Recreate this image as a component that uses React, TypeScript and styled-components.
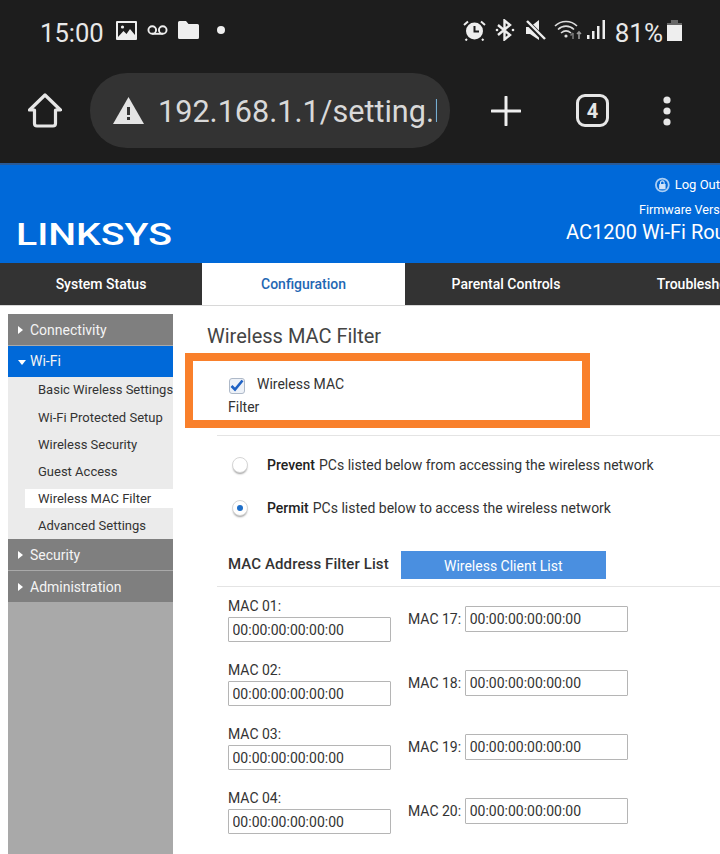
import React from "react";
import styled, { createGlobalStyle } from "styled-components";

const Global = createGlobalStyle`
  html, body { margin: 0; padding: 0; background: #fff; }
  body { font-family: Roboto, "Liberation Sans", sans-serif; }
  * { box-sizing: border-box; }
`;

const Page = styled.div`
  position: relative;
  width: 720px;
  height: 854px;
  overflow: hidden;
  display: flex;
  flex-direction: column;
`;

const Chrome = styled.header`
  height: 165px;
  flex: none;
  background: #1d1d1d;
  border-bottom: 2px solid #2a5a96;
  color: #eaeaea;
`;

const StatusBar = styled.div`
  height: 62px;
  padding: 4px 38px 0 40px;
  display: flex;
  align-items: center;
`;

const Clock = styled.span`
  font-size: 25.6px;
  line-height: 32px;
  color: #e8e8e8;
  margin-right: 12px;
`;

const StatusGroup = styled.div`
  display: flex;
  align-items: center;
  margin-bottom: 6px;
`;

const Slot = styled.span<{ $ml: number }>`
  display: flex;
  margin-left: ${(p) => p.$ml}px;
`;

const Spacer = styled.div`
  flex: 1;
`;

const Percent = styled.span`
  font-size: 26px;
  line-height: 32px;
  margin: 6px 0 0 9px;
  color: #e8e8e8;
`;

const Toolbar = styled.div`
  height: 101px;
  padding: 11px 0 15px 28px;
  display: flex;
  align-items: center;
`;

const UrlPill = styled.div`
  width: 360px;
  height: 75px;
  margin-left: 28px;
  padding: 0 13px 0 23px;
  border-radius: 37px;
  background: #333333;
  display: flex;
  align-items: center;
  flex: none;
`;

const UrlText = styled.div`
  margin: 2px 0 0 14px;
  font-size: 30.6px;
  color: #d9d9d9;
  white-space: nowrap;
  overflow: hidden;
  flex: 1;
`;

const ToolIcons = styled.div`
  margin-left: 41px;
  display: flex;
  align-items: center;
`;

const TabCount = styled.div`
  width: 33px;
  height: 33px;
  margin-left: 55px;
  border: 3px solid #e6e6e6;
  border-radius: 9px;
  display: flex;
  align-items: center;
  justify-content: center;
  font-size: 20px;
  font-weight: 700;
  color: #e6e6e6;
`;

const DotsWrap = styled.div`
  margin-left: 54px;
  display: flex;
`;

const BrandBar = styled.div`
  height: 98px;
  flex: none;
  background: #0069d9;
  color: #fff;
  position: relative;
  display: flex;
`;

const LogoWrap = styled.div`
  margin: 56px 0 0 16px;
  width: 157px;
  height: 24px;
  flex: none;
  svg {
    overflow: visible;
    display: block;
  }
`;

const Meta = styled.div`
  flex: 1;
  display: flex;
  flex-direction: column;
  overflow: hidden;
`;

const MetaLine = styled.div<{ $left: number; $size: number; $top: number }>`
  margin-left: ${(p) => p.$left}px;
  margin-top: ${(p) => p.$top}px;
  font-size: ${(p) => p.$size}px;
  line-height: ${(p) => p.$size + 4}px;
  white-space: nowrap;
  display: flex;
  align-items: center;
  gap: 5px;
`;

const Tabs = styled.nav`
  height: 43px;
  flex: none;
  display: flex;
  background: #333;
  overflow: hidden;
`;

const Tab = styled.div<{ $active?: boolean; $w: number }>`
  width: ${(p) => p.$w}px;
  flex: none;
  display: flex;
  align-items: center;
  justify-content: center;
  font-size: 14px;
  font-weight: 500;
  white-space: nowrap;
  color: ${(p) => (p.$active ? "#1f67b3" : "#fff")};
  background: ${(p) => (p.$active ? "#fff" : "#333")};
  border-bottom: 1px solid #d8d8d8;
`;

const Body = styled.div`
  flex: 1;
  display: flex;
  min-height: 0;
`;

const Sidebar = styled.aside`
  width: 165px;
  margin: 8px 0 0 8px;
  background: #a9a9a9;
  flex: none;
`;

const NavHead = styled.div<{ $active?: boolean }>`
  height: 31px;
  margin-bottom: 1px;
  padding: 0 0 ${(p) => (p.$active ? 2 : 0)}px 10px;
  display: flex;
  align-items: center;
  gap: 6px;
  font-size: 14px;
  color: #f4f4f4;
  background: ${(p) => (p.$active ? "#0069d9" : "#7f7f7f")};
`;

const ArrowRight = styled.span`
  width: 0;
  height: 0;
  border-left: 5px solid #fff;
  border-top: 4px solid transparent;
  border-bottom: 4px solid transparent;
  margin-right: 1px;
`;

const ArrowDown = styled.span`
  width: 0;
  height: 0;
  margin-top: 3px;
  margin-right: -2px;
  border-top: 5px solid #fff;
  border-left: 4.5px solid transparent;
  border-right: 4.5px solid transparent;
`;

const SubNav = styled.div`
  margin-top: -1px;
  padding: 0 0 0 17px;
  height: 162px;
  background: #ebebeb;
  display: flex;
  flex-direction: column;
`;

const SubItem = styled.div`
  height: 27px;
  padding-left: 13px;
  flex: none;
  display: flex;
  align-items: center;
  font-size: 13px;
  white-space: nowrap;
  color: #333;
  &:first-child {
    height: 24px;
    margin-bottom: 3px;
  }
`;

const CurrentBand = styled(SubItem)`
  height: 19px;
  margin: 4px 0;
  background: #fff;
`;

const Main = styled.main`
  flex: 1;
  padding: 18px 0 0 34px;
  color: #333;
  min-width: 0;
`;

const Title = styled.h1`
  margin: 0;
  font-size: 20px;
  font-weight: 400;
  line-height: 24px;
  color: #444;
`;

const CheckBlock = styled.div`
  margin: 25px 0 0 21px;
  width: 140px;
  font-size: 14px;
  line-height: 23px;
  color: #333;
`;

const CheckBox = styled.span`
  display: inline-flex;
  vertical-align: -3px;
  align-items: center;
  justify-content: center;
  width: 16px;
  height: 16px;
  margin: 0 12px 0 1px;
  border: 1px solid #aeb9c8;
  border-radius: 3px;
  background: #eef2f8;
`;

const Section = styled.section`
  margin-left: 10px;
  padding: 16px 0 0 0;
`;

const Rule = styled.hr`
  margin: 0;
  border: 0;
  height: 1px;
  background: #e4e4e4;
`;

const RadioList = styled.div`
  padding-top: 7px;
`;

const RadioRow = styled.div`
  height: 43px;
  display: flex;
  align-items: center;
  padding-left: 15px;
  font-size: 14px;
  white-space: nowrap;
  color: #333;
`;

const Radio = styled.span<{ $on?: boolean }>`
  width: 16px;
  height: 16px;
  margin-right: 19px;
  border-radius: 50%;
  background: #fff;
  border: 1px solid #d5d5d5;
  box-shadow: 0 2px 2px -1px #999;
  display: flex;
  align-items: center;
  justify-content: center;
  &::after {
    content: "";
    width: 6px;
    height: 6px;
    border-radius: 50%;
    background: ${(p) => (p.$on ? "#1f6fc9" : "transparent")};
  }
`;

const Strong = styled.b`
  font-weight: 500;
  margin-right: 4px;
  color: #222;
`;

const ListHead = styled.div`
  margin-top: 22px;
  height: 35px;
  padding: 0 0 0 11px;
  display: flex;
  align-items: flex-start;
`;

const ListTitle = styled.h2`
  margin: 5px 12px 0 0;
  font-size: 15px;
  line-height: 17px;
  font-weight: 500;
  letter-spacing: 0.1px;
  color: #333;
  white-space: nowrap;
`;

const ClientButton = styled.button`
  width: 205px;
  height: 28px;
  padding: 2px 0 0;
  border: 0;
  background: #4a8fe0;
  color: #fff;
  font: 400 14px Roboto, sans-serif;
`;

const MacGrid = styled.div`
  padding: 10px 0 0 11px;
  display: grid;
  grid-template-columns: 163px auto;
  column-gap: 17px;
  grid-auto-rows: 64px;
  font-size: 14px;
  color: #333;
`;

const MacStack = styled.div`
  display: flex;
  flex-direction: column;
`;

const MacLabel = styled.label`
  height: 20px;
  line-height: 19px;
  white-space: nowrap;
`;

const MacInline = styled.div`
  height: 26px;
  display: flex;
  align-items: center;
  gap: 4px;
  margin-top: 9px;
  white-space: nowrap;
`;

const MacInput = styled.input<{ $h: number }>`
  width: 163px;
  height: ${(p) => p.$h}px;
  padding: 0 3.5px;
  flex: none;
  border: 1px solid #b5b5b5;
  border-radius: 1px;
  background: #fff;
  font: 400 14px Roboto, sans-serif;
  color: #333;
  outline: none;
`;

const Highlight = styled.div`
  position: absolute;
  left: 185px;
  top: 353px;
  width: 405px;
  height: 75px;
  border: 8px solid #f9802b;
  pointer-events: none;
`;

const ImageIcon = () => (
  <svg width="21" height="19" viewBox="0 0 21 19">
    <rect x="0" y="0" width="21" height="19" rx="1" fill="#eee" />
    <rect x="2" y="2" width="17" height="14" fill="#1d1d1d" />
    <circle cx="6.5" cy="6" r="1.6" fill="#eee" />
    <path d="M2 16 L7.5 10 L10.5 13 L14 8 L19 14 V16Z" fill="#eee" />
  </svg>
);

const VoicemailIcon = () => (
  <svg width="21" height="12" viewBox="0 0 22 12" fill="none" stroke="#eee" strokeWidth="2">
    <circle cx="5.5" cy="6" r="4" />
    <circle cx="16.5" cy="6" r="4" />
    <path d="M5.5 10H16.5" />
  </svg>
);

const FolderIcon = () => (
  <svg width="21" height="18" viewBox="0 0 21 18">
    <path d="M1.5 0H8L10.5 3H19.5A1.5 1.5 0 0 1 21 4.5V16.5A1.5 1.5 0 0 1 19.5 18H1.5A1.5 1.5 0 0 1 0 16.5V1.5A1.5 1.5 0 0 1 1.5 0Z" fill="#eee" />
  </svg>
);

const DotIcon = () => (
  <svg width="8" height="8" viewBox="0 0 8 8">
    <circle cx="4" cy="4" r="4" fill="#eee" />
  </svg>
);

const AlarmIcon = () => (
  <svg width="23" height="21" viewBox="0 0 23 21">
    <circle cx="11.5" cy="11" r="8.5" fill="#eee" />
    <path d="M11.5 6V11.5H16" stroke="#1d1d1d" strokeWidth="2" fill="none" />
    <path d="M1 5L5 1.5M22 5L18 1.5M4 19L2.5 20.5M19 19L20.5 20.5" stroke="#eee" strokeWidth="2" />
  </svg>
);

const BluetoothIcon = () => (
  <svg width="20" height="22" viewBox="0 0 20 22" fill="none" stroke="#eee" strokeWidth="2.4">
    <path d="M3 6L15 16L9.5 20.5V1.5L15 6L3 16" />
    <circle cx="2" cy="11" r="1.3" fill="#eee" stroke="none" />
    <circle cx="18" cy="11" r="1.3" fill="#eee" stroke="none" />
  </svg>
);

const MuteIcon = () => (
  <svg width="20" height="20" viewBox="0 0 20 20">
    <path d="M0 7H4L13 0V20L4 14H0Z" fill="#eee" />
    <path d="M1 2L18 19" stroke="#1d1d1d" strokeWidth="5" />
    <path d="M1 1L19 19" stroke="#eee" strokeWidth="2.4" />
  </svg>
);

const WifiIcon = () => (
  <svg width="28" height="20" viewBox="0 0 28 20" fill="none" stroke="#ddd" strokeWidth="1.6">
    <path d="M1 6C7 0 17 0 23 6" />
    <path d="M4 9.5C8.5 5 15.5 5 20 9.5" />
    <path d="M7 13C10 10.5 14 10.5 17 13" />
    <circle cx="12" cy="16" r="1.6" fill="#ddd" stroke="none" />
    <path d="M19 19V13M16.5 15.5L19 13" stroke="#777" />
    <path d="M25 19V12M23 14L25 12L27 14" stroke="#999" />
  </svg>
);

const SignalIcon = () => (
  <svg width="19" height="20" viewBox="0 0 19 20" fill="#eee">
    <rect x="0" y="15" width="2.5" height="4" />
    <rect x="5" y="11" width="2.5" height="8" />
    <rect x="10" y="6" width="2.5" height="13" />
    <rect x="15.5" y="0" width="2.5" height="19" />
  </svg>
);

const BatteryIcon = () => (
  <svg width="15" height="21" viewBox="0 0 15 21">
    <path d="M4 0H11V3H15V21H0V3H4Z" fill="#666" />
    <rect x="0" y="5" width="15" height="16" fill="#eee" />
  </svg>
);

const HomeIcon = () => (
  <svg width="34" height="35" viewBox="0 0 34 35" fill="none" stroke="#e6e6e6" strokeWidth="3.2" strokeLinejoin="round">
    <path d="M1.5 17L17 2L32.5 17H27.5V30.5A2.5 2.5 0 0 1 25 33H9A2.5 2.5 0 0 1 6.5 30.5V17Z" />
  </svg>
);

const WarningIcon = () => (
  <svg width="31" height="27" viewBox="0 0 31 27">
    <path d="M15.5 0L31 27H0Z" fill="#e4e4e4" />
    <rect x="14" y="10" width="3" height="8" fill="#333" />
    <rect x="14" y="20" width="3" height="3" fill="#333" />
  </svg>
);

const PlusIcon = () => (
  <svg width="30" height="30" viewBox="0 0 30 30" stroke="#eee" strokeWidth="3" strokeLinecap="round">
    <path d="M15 1V29M1 15H29" />
  </svg>
);

const DotsIcon = () => (
  <svg width="8" height="30" viewBox="0 0 8 30" fill="#e6e6e6">
    <circle cx="4" cy="4" r="3.6" />
    <circle cx="4" cy="15" r="3.6" />
    <circle cx="4" cy="26" r="3.6" />
  </svg>
);

const LockIcon = () => (
  <svg width="16" height="16" viewBox="0 0 16 16">
    <circle cx="8" cy="8" r="7" fill="#0069d9" stroke="#a9cdf3" strokeWidth="2" />
    <rect x="4.5" y="7" width="7" height="5.5" rx="0.5" fill="#cfe2f8" />
    <path d="M6 7V5.5A2 2 0 0 1 10 5.5V7" stroke="#cfe2f8" strokeWidth="1.2" fill="none" />
  </svg>
);

const CheckMark = () => (
  <svg width="14" height="13" viewBox="0 0 14 13" fill="none" stroke="#1f62c4" strokeWidth="2.6">
    <path d="M1.5 7L5 10.5L12.5 1.5" />
  </svg>
);

const Logo = () => (
  <svg width="157" height="24" viewBox="0 0 157 24">
    <text
      x="0"
      y="24"
      textLength="156"
      lengthAdjust="spacingAndGlyphs"
      fontFamily="Roboto, sans-serif"
      fontWeight="500"
      fontSize="31"
      fill="#fff"
    >
      LINKSYS
    </text>
  </svg>
);

const macRows = [
  ["01", "17"],
  ["02", "18"],
  ["03", "19"],
  ["04", "20"],
];

const subItems = [
  "Basic Wireless Settings",
  "Wi-Fi Protected Setup",
  "Wireless Security",
  "Guest Access",
  "Wireless MAC Filter",
  "Advanced Settings",
];

const ZERO = "00:00:00:00:00:00";

export default function App() {
  return (
    <Page>
      <Global />
      <Chrome>
        <StatusBar>
          <Clock>15:00</Clock>
          <StatusGroup>
            <Slot $ml={0}>
              <ImageIcon />
            </Slot>
            <Slot $ml={10}>
              <VoicemailIcon />
            </Slot>
            <Slot $ml={10}>
              <FolderIcon />
            </Slot>
            <Slot $ml={18}>
              <DotIcon />
            </Slot>
          </StatusGroup>
          <Spacer />
          <StatusGroup>
            <Slot $ml={0}>
              <AlarmIcon />
            </Slot>
            <Slot $ml={9}>
              <BluetoothIcon />
            </Slot>
            <Slot $ml={11}>
              <MuteIcon />
            </Slot>
            <Slot $ml={8}>
              <WifiIcon />
            </Slot>
            <Slot $ml={5}>
              <SignalIcon />
            </Slot>
            <Percent>81%</Percent>
            <Slot $ml={4}>
              <BatteryIcon />
            </Slot>
          </StatusGroup>
        </StatusBar>
        <Toolbar>
          <HomeIcon />
          <UrlPill>
            <WarningIcon />
            <UrlText>192.168.1.1/setting.l</UrlText>
          </UrlPill>
          <ToolIcons>
            <PlusIcon />
            <TabCount>4</TabCount>
            <DotsWrap>
              <DotsIcon />
            </DotsWrap>
          </ToolIcons>
        </Toolbar>
      </Chrome>
      <BrandBar>
        <LogoWrap>
          <Logo />
        </LogoWrap>
        <Meta>
          <MetaLine $left={482} $size={13} $top={11}>
            <LockIcon />
            Log Out
          </MetaLine>
          <MetaLine $left={466} $size={12.6} $top={9}>
            Firmware Version
          </MetaLine>
          <MetaLine $left={393} $size={20} $top={1}>
            AC1200 Wi-Fi Router
          </MetaLine>
        </Meta>
      </BrandBar>
      <Tabs>
        <Tab $w={202}>System Status</Tab>
        <Tab $w={203} $active>
          Configuration
        </Tab>
        <Tab $w={202}>Parental Controls</Tab>
        <Tab $w={202}>Troubleshooting</Tab>
      </Tabs>
      <Body>
        <Sidebar>
          <NavHead>
            <ArrowRight />
            Connectivity
          </NavHead>
          <NavHead $active>
            <ArrowDown />
            Wi-Fi
          </NavHead>
          <SubNav>
            {subItems.map((s) =>
              s === "Wireless MAC Filter" ? (
                <CurrentBand key={s}>{s}</CurrentBand>
              ) : (
                <SubItem key={s}>{s}</SubItem>
              )
            )}
          </SubNav>
          <NavHead>
            <ArrowRight />
            Security
          </NavHead>
          <NavHead>
            <ArrowRight />
            Administration
          </NavHead>
        </Sidebar>
        <Main>
          <Title>Wireless MAC Filter</Title>
          <CheckBlock>
            <CheckBox>
              <CheckMark />
            </CheckBox>
            Wireless MAC Filter
          </CheckBlock>
          <Section>
            <Rule />
            <RadioList>
              <RadioRow>
                <Radio />
                <Strong>Prevent</Strong> PCs listed below from accessing the wireless network
              </RadioRow>
              <RadioRow>
                <Radio $on />
                <Strong>Permit</Strong> PCs listed below to access the wireless network
              </RadioRow>
            </RadioList>
            <ListHead>
              <ListTitle>MAC Address Filter List</ListTitle>
              <ClientButton>Wireless Client List</ClientButton>
            </ListHead>
            <Rule />
            <MacGrid>
              {macRows.map(([a, b]) => (
                <React.Fragment key={a}>
                  <MacStack>
                    <MacLabel>MAC {a}:</MacLabel>
                    <MacInput $h={25} readOnly value={ZERO} />
                  </MacStack>
                  <MacInline>
                    MAC {b}:
                    <MacInput $h={26} readOnly value={ZERO} />
                  </MacInline>
                </React.Fragment>
              ))}
            </MacGrid>
          </Section>
        </Main>
      </Body>
      <Highlight />
    </Page>
  );
}
